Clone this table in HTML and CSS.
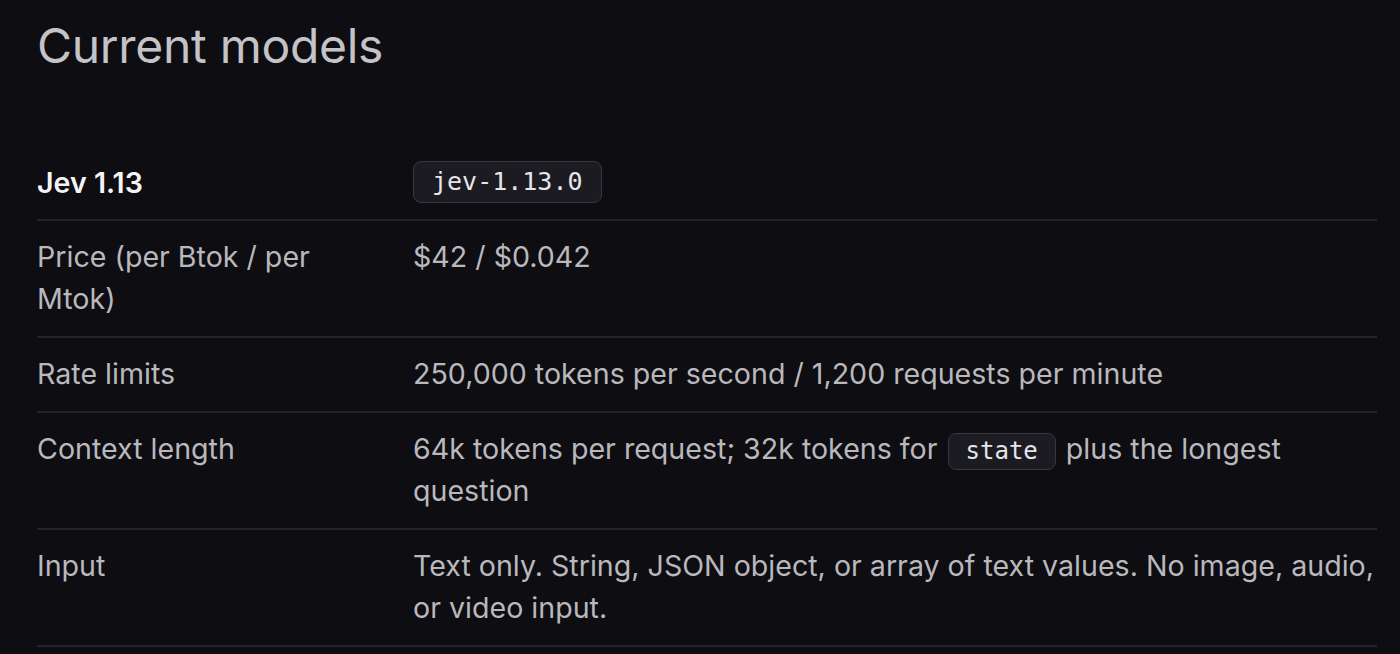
FILE: index.html
```html
<!DOCTYPE html>
<html lang="en">
<head>
    <meta charset="UTF-8">
    <meta name="viewport" content="width=device-width, initial-scale=1.0">
    <title>Current models</title>
    <link rel="stylesheet" href="styles.css">
</head>
<body>
    <div class="container">
        <h1 class="title">Current models</h1>

        <div class="models">
            <div class="row head">
                <div class="label">Jev 1.13</div>
                <div class="value"><code class="tag">jev-1.13.0</code></div>
            </div>
            <div class="row">
                <div class="label">Price (per Btok / per Mtok)</div>
                <div class="value">$42 / $0.042</div>
            </div>
            <div class="row">
                <div class="label">Rate limits</div>
                <div class="value">250,000 tokens per second / 1,200 requests per minute</div>
            </div>
            <div class="row">
                <div class="label">Context length</div>
                <div class="value">64k tokens per request; 32k tokens for <code class="tag small">state</code> plus the longest question</div>
            </div>
            <div class="row">
                <div class="label">Input</div>
                <div class="value">Text only. String, JSON object, or array of text values. No image, audio, or video input.</div>
            </div>
        </div>
    </div>
</body>
</html>
```

FILE: styles.css
```css
body {
    margin: 0;
    background-color: #0e0d12;
    font-family: Inter, "Noto Sans", sans-serif;
    color: #b9b8bd;
}

.container {
    padding: 0 23px 0 37px;
}

.title {
    margin: 0;
    padding-top: 18px;
    font-size: 48px;
    font-weight: 400;
    line-height: 56px;
    color: #c4c3c8;
    letter-spacing: -0.3px;
}

.models {
    margin-top: 70px;
}

.row {
    display: grid;
    grid-template-columns: 376px 1fr;
    padding: 15px 0 16px;
    border-bottom: 2px solid #25242a;
    font-size: 28.6px;
    line-height: 42px;
}

.row.head {
    padding: 15px 0 12px;
}

.head .label {
    color: #f4f4f6;
    font-weight: 600;
    line-height: 48px;
}

.label {
    padding-right: 40px;
}

.tag {
    display: inline-block;
    padding: 2px 18px;
    font-family: "DejaVu Sans Mono", "Liberation Mono", monospace;
    font-size: 25px;
    line-height: 36px;
    color: #e6e5e9;
    background-color: #1c1b21;
    border: 1px solid #38373e;
    border-radius: 8px;
    vertical-align: middle;
}

.tag.small {
    font-size: 24px;
    line-height: 33px;
    padding: 1px 17px;
    margin: 0 2px;
}
```
